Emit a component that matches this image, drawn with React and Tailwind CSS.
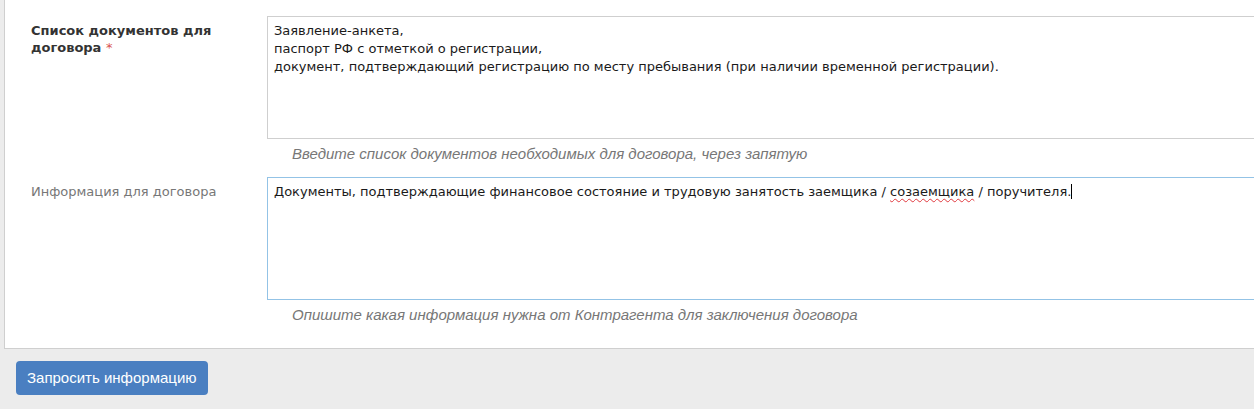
import React from 'react';

// Form fields for the contract request
const FIELDS = [
  {
    id: 'docs',
    label: 'Список документов для договора',
    required: true,
    lines: [
      'Заявление-анкета,',
      'паспорт РФ с отметкой о регистрации,',
      'документ, подтверждающий регистрацию по месту пребывания (при наличии временной регистрации).',
    ],
    hint: 'Введите список документов необходимых для договора, через запятую',
    focused: false,
  },
  {
    id: 'info',
    label: 'Информация для договора',
    required: false,
    lines: null,
    hint: 'Опишите какая информация нужна от Контрагента для заключения договора',
    focused: true,
  },
];

function FakeTextarea({ focused, children }) {
  return (
    <div
      className={`w-[1100px] h-[123px] bg-white border px-[6px] pt-[5px] text-[13px] leading-[18px] text-[#1a1a1a] font-['DejaVu_Sans',Verdana,sans-serif] ${
        focused ? 'border-[#93c3e6]' : 'border-[#cfcfcf]'
      }`}
    >
      {children}
    </div>
  );
}

function Row({ field }) {
  return (
    <div className="flex">
      <div className="w-[262px] shrink-0 pl-[26px] pr-4 pt-[6px]">
        {field.required ? (
          <div className="font-['DejaVu_Sans',Verdana,sans-serif] text-[13px] leading-[17px] font-bold text-[#333]">
            Список документов для
            <br />
            договора <span className="text-[#d9534f] font-normal">*</span>
          </div>
        ) : (
          <div className="font-['DejaVu_Sans',Verdana,sans-serif] text-[13px] leading-[17px] text-[#777]">
            {field.label}
          </div>
        )}
      </div>
      <div className="flex-1 min-w-0">
        <FakeTextarea focused={field.focused}>
          {field.lines ? (
            field.lines.map((l) => <div key={l}>{l}</div>)
          ) : (
            <div>
              Документы, подтверждающие финансовое состояние и трудовую занятость заемщика /{' '}
              <span className="underline decoration-wavy decoration-[#e0393e] decoration-1 underline-offset-2">
                созаемщика
              </span>{' '}
              / поручителя.
              <span className="inline-block w-px h-[15px] bg-black align-[-3px]"></span>
            </div>
          )}
        </FakeTextarea>
        <p className="pl-[25px] pt-[5px] pb-[13px] font-['Liberation_Sans',Arial,sans-serif] italic text-[15px] leading-[20px] text-[#777]">
          {field.hint}
        </p>
      </div>
    </div>
  );
}

export default function App() {
  return (
    <div className="w-[1254px] h-[409px] overflow-hidden bg-[#ececec]">
      <div className="ml-[4px] -mt-px w-[1300px] bg-white border border-[#cfcfcf] pt-[16px] pb-[10px]">
        {FIELDS.map((f) => (
          <Row key={f.id} field={f} />
        ))}
      </div>
      <div className="pt-[12px] pl-[16px]">
        <button className="h-[34px] px-[11px] rounded-[4px] bg-[#4a7fc1] text-white text-[15px] font-['Liberation_Sans',Arial,sans-serif]">
          Запросить информацию
        </button>
      </div>
    </div>
  );
}
